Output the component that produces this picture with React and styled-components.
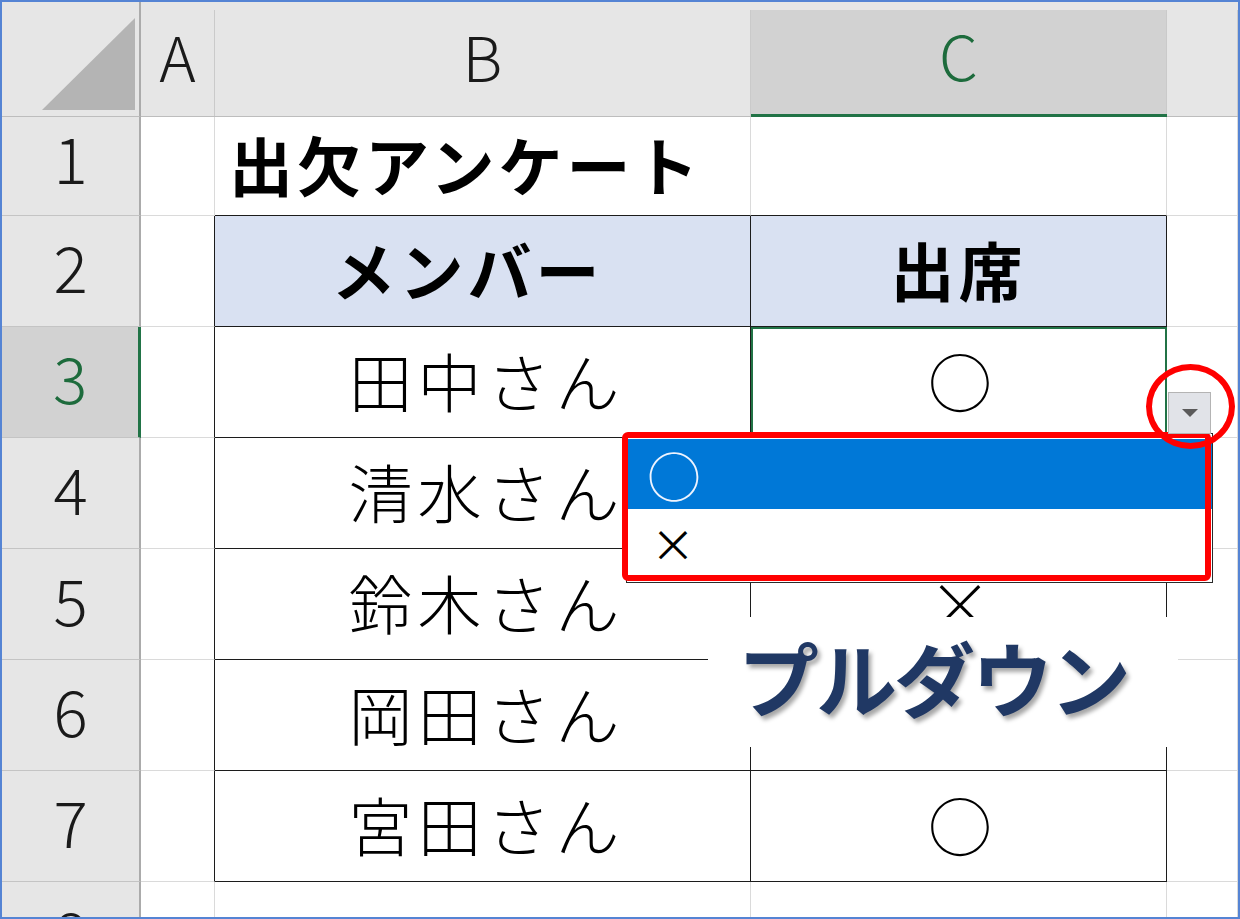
import React from 'react'
import styled, { createGlobalStyle, css } from 'styled-components'

const GlobalStyle = createGlobalStyle`
  body {
    margin: 0;
    background: #fff;
    font-family: 'Noto Sans CJK JP', 'Noto Sans', sans-serif;
  }
`

const Frame = styled.div`
  position: relative;
  width: 1240px;
  height: 919px;
  box-sizing: border-box;
  border: 2px solid #5584d4;
  overflow: hidden;
  background: #fff;
`

const Sheet = styled.div`
  display: grid;
  grid-template-columns: 139px 74px 536px 416px 1fr;
  grid-template-rows: 115px 99px repeat(7, 111px);
`

const Corner = styled.div`
  box-sizing: border-box;
  background: #e6e6e6;
  border-right: 2px solid #ababab;
  border-bottom: 1px solid #bdbdbd;

  svg {
    display: block;
  }
`

const ColHeader = styled.div`
  box-sizing: border-box;
  display: flex;
  padding-top: 8px;
  background: #e6e6e6;
  border-bottom: ${p => (p.$selected ? '3px solid #217346' : '1px solid #bdbdbd')};
`

const ColFace = styled.div`
  flex: 1;
  display: flex;
  align-items: center;
  justify-content: center;
  padding-bottom: 16px;
  border-right: 1px solid #cacaca;
  font-size: 62px;
  font-weight: 300;
  color: ${p => (p.$selected ? '#1d6b3c' : '#1a1a1a')};
  background: ${p => (p.$selected ? '#d2d2d2' : 'transparent')};
`

const RowHeader = styled.div`
  box-sizing: border-box;
  display: flex;
  align-items: center;
  justify-content: center;
  padding-bottom: ${p => (p.$first ? '20px' : '12px')};
  background: ${p => (p.$selected ? '#d2d2d2' : '#e6e6e6')};
  border-right: ${p => (p.$selected ? '3px solid #217346' : '2px solid #ababab')};
  border-bottom: 1px solid #c4c4c4;
  font-size: 64px;
  font-weight: 300;
  color: ${p => (p.$selected ? '#1d6b3c' : '#1a1a1a')};
`

const lineColor = { grid: '#dadada', table: '#1c1c1c' }

const Cell = styled.div`
  box-sizing: border-box;
  display: flex;
  align-items: center;
  justify-content: ${p => (p.$left ? 'flex-start' : 'center')};
  padding-left: ${p => (p.$left ? '14px' : p.$bold ? '0' : '8px')};
  padding-right: ${p => (p.$shift ? '30px' : '0')};
  padding-bottom: 6px;
  border-right: 1px solid ${p => lineColor[p.$right || 'grid']};
  border-bottom: 1px solid ${p => lineColor[p.$bottom || 'grid']};
  background: ${p => p.$fill || '#fff'};
  font-size: 64px;
  font-weight: ${p => (p.$bold ? 700 : 300)};
  letter-spacing: ${p => (p.$bold ? '4px' : '5px')};
  color: #000;
  white-space: nowrap;

  ${p =>
    p.$active &&
    css`
      position: relative;
      z-index: 1;
      outline: 2px solid #217346;
      outline-offset: -2px;
    `}
`

/* the list arrow at the active cell, with the red marker ring drawn round it */
const DropButton = styled.div`
  position: absolute;
  left: 1166px;
  top: 390px;
  width: 43px;
  height: 42px;
  box-sizing: border-box;
  display: flex;
  align-items: center;
  justify-content: center;
  background: #e1e3e8;
  border: 1px solid #b4b4b4;
  z-index: 5;

  &::after {
    content: '';
    position: absolute;
    inset: -29px -25px -16px -23px;
    border: 6px solid #ff0000;
    border-radius: 50%;
  }
`

/* the open list, with the red marker frame round it */
const ListBox = styled.div`
  position: absolute;
  left: 624px;
  top: 431px;
  width: 587px;
  height: 150px;
  box-sizing: border-box;
  padding-top: 5px;
  background: #fff;
  border: 1px solid #2a2a2a;
  z-index: 3;

  &::after {
    content: '';
    position: absolute;
    inset: -2px 1px 1px -5px;
    border: 6px solid #ff0000;
    border-radius: 6px;
  }
`

const ListItem = styled.div`
  display: flex;
  align-items: center;
  height: ${p => (p.$selected ? '70px' : '67px')};
  padding-left: ${p => (p.$selected ? '20px' : '24px')};
  font-size: ${p => (p.$selected ? '54px' : '44px')};
  font-weight: ${p => (p.$selected ? 300 : 400)};
  color: ${p => (p.$selected ? '#eef4ff' : '#000')};
  background: ${p => (p.$selected ? '#0078d7' : '#fff')};
`

const Callout = styled.div`
  position: absolute;
  left: 706px;
  top: 615px;
  width: 470px;
  height: 130px;
  box-sizing: border-box;
  display: flex;
  align-items: center;
  justify-content: center;
  padding-bottom: 14px;
  padding-right: 20px;
  background: #fff;
  font-size: 81px;
  font-weight: 700;
  letter-spacing: -3px;
  color: #203864;
  text-shadow: 3px 4px 4px rgba(0, 0, 0, 0.35);
  z-index: 2;
`

const rows = [
  { n: 1, b: '出欠アンケート', c: '', title: true },
  { n: 2, b: 'メンバー', c: '出席', head: true },
  { n: 3, b: '田中さん', c: '○', active: true },
  { n: 4, b: '清水さん', c: '' },
  { n: 5, b: '鈴木さん', c: '×' },
  { n: 6, b: '岡田さん', c: '' },
  { n: 7, b: '宮田さん', c: '○' },
  { n: 8, b: '', c: '', outside: true },
]

const columns = ['A', 'B', 'C', '']

const SheetRow = ({ row }) => {
  const inTable = !row.title && !row.outside
  const headFill = row.head ? '#d9e1f2' : undefined

  return (
    <>
      <RowHeader $selected={row.active} $first={row.title}>
        {row.n}
      </RowHeader>
      <Cell $right={inTable ? 'table' : 'grid'} />
      <Cell
        $right={inTable ? 'table' : 'grid'}
        $bottom={row.outside ? 'grid' : 'table'}
        $fill={headFill}
        $bold={row.title || row.head}
        $left={row.title}
        $shift={row.head}
      >
        {row.b}
      </Cell>
      <Cell
        $right={inTable ? 'table' : 'grid'}
        $bottom={row.outside ? 'grid' : 'table'}
        $fill={headFill}
        $bold={row.head}
        $active={row.active}
      >
        {row.c}
      </Cell>
      <Cell />
    </>
  )
}

const App = () => (
  <>
    <GlobalStyle />
    <Frame>
      <Sheet>
        <Corner>
          <svg width="137" height="114" viewBox="0 0 137 114">
            <polygon points="40,108 133,16 133,108" fill="#b4b4b4" />
          </svg>
        </Corner>
        {columns.map(col => (
          <ColHeader key={col || 'D'} $selected={col === 'C'}>
            <ColFace $selected={col === 'C'}>{col}</ColFace>
          </ColHeader>
        ))}
        {rows.map(row => (
          <SheetRow key={row.n} row={row} />
        ))}
      </Sheet>

      <DropButton>
        <svg width="16" height="8" viewBox="0 0 16 8">
          <polygon points="0,0 16,0 8,8" fill="#5a5a5a" />
        </svg>
      </DropButton>

      <ListBox>
        <ListItem $selected>○</ListItem>
        <ListItem>×</ListItem>
      </ListBox>

      <Callout>プルダウン</Callout>
    </Frame>
  </>
)

export default App
